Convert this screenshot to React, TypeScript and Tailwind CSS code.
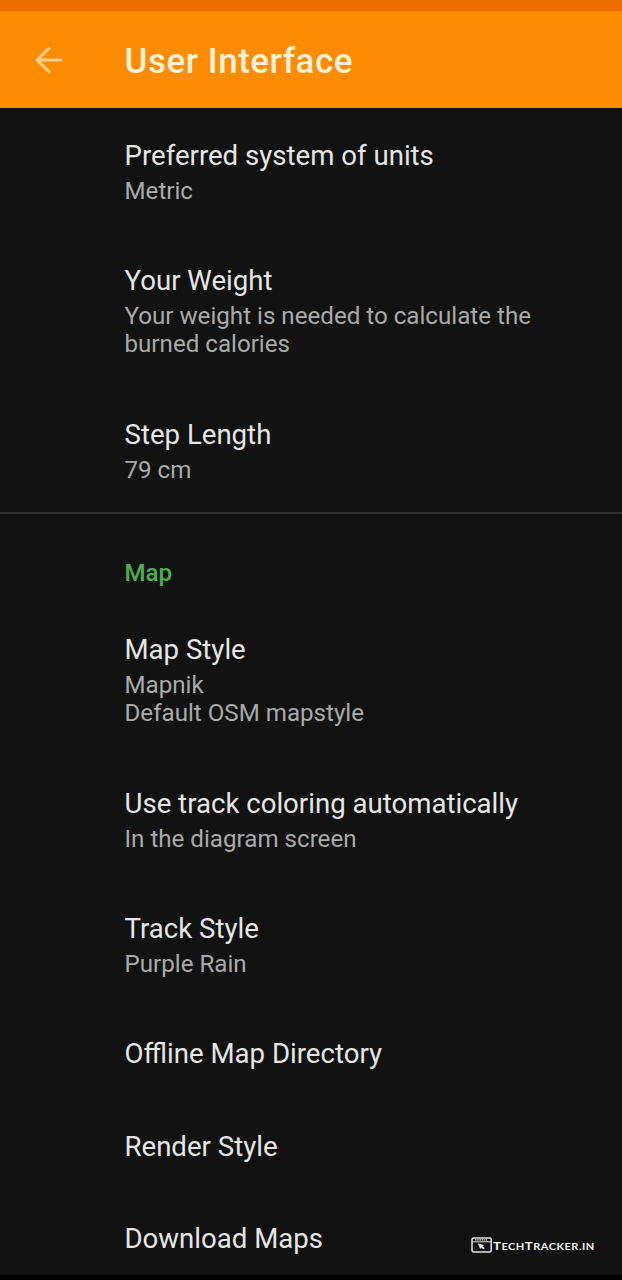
import React from "react";

type ItemProps = { title: string; lines?: string[]; className: string };

function Item({ title, lines = [], className }: ItemProps) {
  return (
    <div className={className}>
      <div className="mb-[3.5px] h-[35px] text-[27.6px] leading-[35px] text-[#e6e6e6]">{title}</div>
      {lines.map((l) => (
        <div key={l} className="whitespace-nowrap text-[24.15px] leading-[28.5px] text-[#aaaaaa]">{l}</div>
      ))}
    </div>
  );
}

export default function App() {
  return (
    <div className="relative flex h-[1280px] w-[622px] flex-col overflow-hidden bg-[#121212] font-['Roboto',sans-serif]">
      <div className="h-[11px] shrink-0 bg-[#ef6c00]" />
      <header className="flex h-[97px] shrink-0 items-center bg-[#fd8c00] pl-[34px]">
        <svg width="30" height="30" viewBox="0 0 30 30" fill="none" stroke="#ffd08c" strokeWidth="2.8">
          <path d="M28.2 15H3M16 2.4L3 15L16 27.6" />
        </svg>
        <h1 className="ml-[60.5px] pt-[4px] text-[35px] font-medium leading-[40px] tracking-[0.5px] text-[#fff0dc]">User Interface</h1>
      </header>
      <main className="flex flex-1 flex-col">
        <section className="flex h-[406px] shrink-0 flex-col border-b-2 border-[#303030] pl-[124.5px] pt-[30px]">
          <Item className="h-[125px]" title="Preferred system of units" lines={["Metric"]} />
          <Item className="h-[154px]" title="Your Weight" lines={["Your weight is needed to calculate the", "burned calories"]} />
          <Item className="" title="Step Length" lines={["79 cm"]} />
        </section>
        <section className="flex flex-col pl-[124.5px] pt-[42px]">
          <h2 className="h-[76px] text-[24.15px] font-medium leading-[34px] text-[#4caf50]">Map</h2>
          <Item className="h-[154px]" title="Map Style" lines={["Mapnik", "Default OSM mapstyle"]} />
          <Item className="h-[125px]" title="Use track coloring automatically" lines={["In the diagram screen"]} />
          <Item className="h-[125px]" title="Track Style" lines={["Purple Rain"]} />
          <Item className="h-[92.5px]" title="Offline Map Directory" />
          <Item className="h-[92.5px]" title="Render Style" />
          <Item className="h-[35px]" title="Download Maps" />
        </section>
      </main>
      <div className="absolute bottom-0 left-0 h-[5px] w-full bg-black" />
      <div className="absolute left-[471px] top-[1237px] flex h-[16px] items-center text-[#f4f4f4]">
        <svg width="22" height="16" viewBox="0 0 22 16" fill="none" stroke="#e4e4e4" strokeWidth="1.5">
          <rect x="1" y="1" width="19.2" height="14" rx="1.5" />
          <path d="M1 4.8H20" strokeWidth="1" />
          <path d="M4 2.9H16" strokeWidth="1.4" strokeDasharray="1.5 0.7" />
          <path d="M7 6.5l6.3 1.4-1.7 1.3 2 2.1-1.2 1.2-2.2-2-1 1.8z" fill="#e4e4e4" stroke="none" />
        </svg>
        <span className="origin-left scale-x-[1.1] whitespace-nowrap pt-[2px] font-['Lato',sans-serif] text-[10px] font-bold leading-[14px] tracking-[0.45px]">
          <span className="text-[12px]">T</span>ECH<span className="text-[12px]">T</span>RACKER.IN
        </span>
      </div>
    </div>
  );
}
